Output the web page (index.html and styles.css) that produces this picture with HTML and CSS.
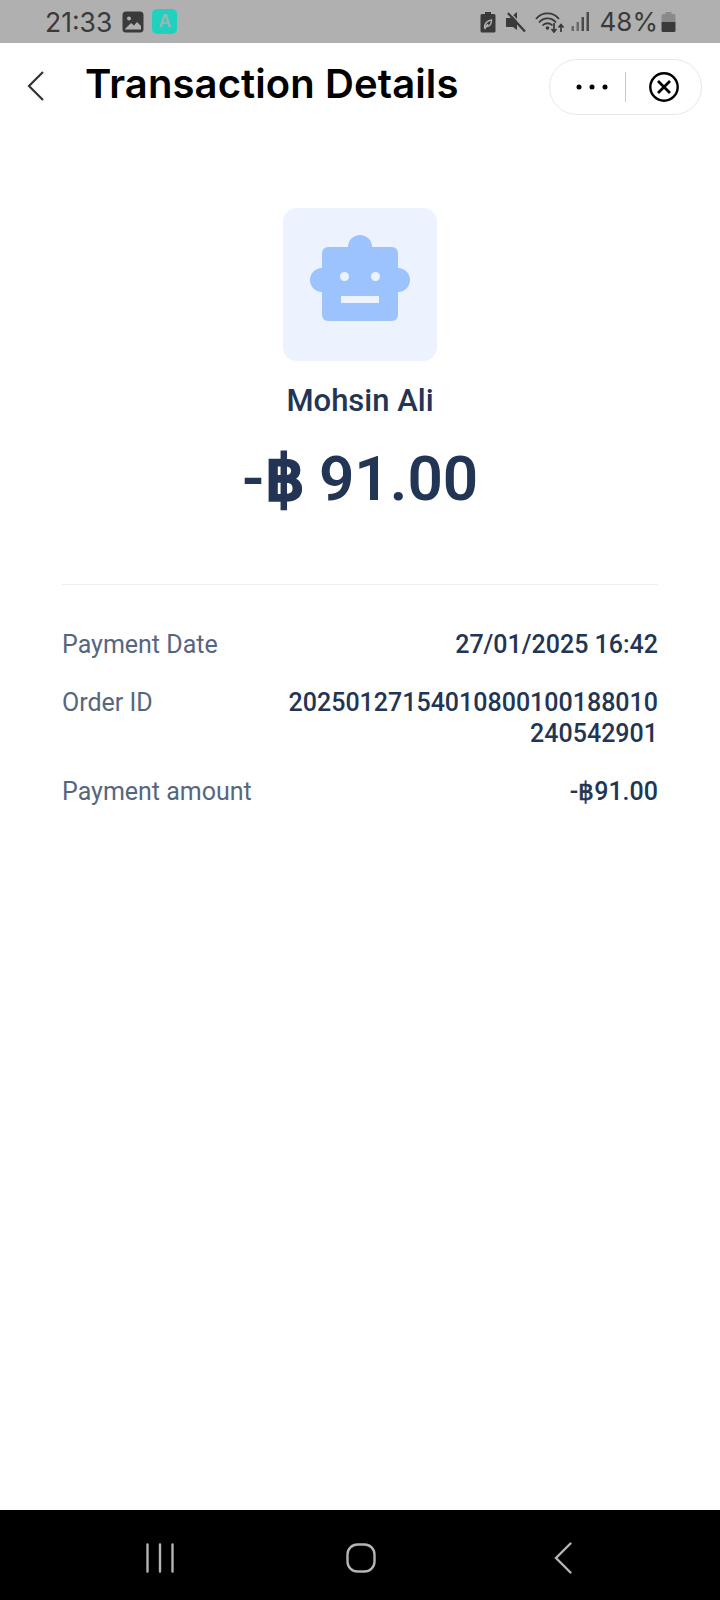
FILE: index.html
```html
<!DOCTYPE html>
<html>
<head>
  <title>Transaction Details</title>
  <meta name='viewport' content='width=device-width, initial-scale=1'>
  <link rel="stylesheet" href="styles.css">
</head>
<body>
  <div class='screen'>
    <div class='status-bar'>
      <div class='status-left'>
        <span class='time'>21:33</span>
        <svg class='pic-icon' width='22' height='22' viewBox='0 0 22 22'>
          <rect x='0.5' y='0.5' width='21' height='21' rx='3.5' fill='#3a3a3a'/>
          <circle cx='7' cy='7.5' r='2' fill='#b0b0b0'/>
          <path d='M3 18 L9 12 L12 14.500 L15 11 L19 15 V18.500 H3 Z' fill='#b0b0b0'/>
        </svg>
        <span class='app-badge'>A</span>
      </div>
      <div class='status-right'>
        <svg width='16' height='22' viewBox='0 0 16 22'>
          <path d='M5 1 H11 V3 H14 a1.5 1.5 0 0 1 1.5 1.5 V20 a1.5 1.5 0 0 1 -1.5 1.5 H2 a1.5 1.5 0 0 1 -1.5 -1.5 V4.500 A1.5 1.5 0 0 1 2 3 H5 Z' fill='#3a3a3a'/>
          <path d='M4.500 17 C4.500 11 8 9.500 11.500 9 C11.500 13 10 15.500 6.500 15.500 M4.500 18 L8 13' fill='none' stroke='#b0b0b0' stroke-width='1.4'/>
        </svg>
        <svg class='mute-icon' width='22' height='22' viewBox='0 0 22 22'>
          <path d='M1 7 H5 L12 1 V19 L8 16 H1 Z' fill='#3a3a3a'/>
          <path d='M3 2 L20 20.500' stroke='#3a3a3a' stroke-width='2.400'/>
          <path d='M4 0.500 L21.500 19' stroke='#b0b0b0' stroke-width='1.200'/>
        </svg>
        <svg class='wifi-icon' width='30' height='22' viewBox='0 0 30 22'>
          <path d='M1 8 C7 0.500 18 0.500 24 8 M4 11.500 C8.500 6 16.500 6 21 11.500 M7.500 14.500 C10 11.500 15 11.500 17.500 14.500' fill='none' stroke='#3a3a3a' stroke-width='1.800'/>
          <circle cx='12.500' cy='17' r='1.800' fill='#3a3a3a'/>
          <path d='M19 12 V21 M16.500 18 L19 21 L21.500 18 M26 21 V14 M23.500 16.500 L26 13.500 L28.500 16.500' fill='none' stroke='#3a3a3a' stroke-width='1.700'/>
        </svg>
        <svg class='signal-icon' width='20' height='22' viewBox='0 0 20 22'>
          <rect x='0.500' y='15' width='2.500' height='5' fill='#6a6a6a'/>
          <rect x='5.500' y='11' width='2.500' height='9' fill='#6a6a6a'/>
          <rect x='10.500' y='6' width='2.500' height='14' fill='#4a4a4a'/>
          <rect x='15.500' y='1' width='2.500' height='19' fill='#4a4a4a'/>
        </svg>
        <span class='battery-text'>48%</span>
        <svg class='battery-icon' width='15' height='22' viewBox='0 0 15 22'>
          <path d='M4.500 1 H10.500 V3 H13 a1.500 1.500 0 0 1 1.500 1.500 V11 H0.500 V4.500 A1.500 1.500 0 0 1 2 3 H4.500 Z' fill='#8a8a8a'/>
          <path d='M0.500 11 H14.500 V19.500 a1.500 1.500 0 0 1 -1.500 1.500 H2 a1.500 1.500 0 0 1 -1.500 -1.500 Z' fill='#3a3a3a'/>
        </svg>
      </div>
    </div>

    <div class='title-bar'>
      <svg class='back-icon' width='20' height='32' viewBox='0 0 20 32'>
        <path d='M17 2 L3 16 L17 30' fill='none' stroke='#333' stroke-width='2.200'/>
      </svg>
      <h1>Transaction Details</h1>
      <div class='capsule'>
        <svg class='dots' width='32' height='6' viewBox='0 0 32 6'>
          <circle cx='3' cy='3' r='2.500' fill='#000'/>
          <circle cx='16' cy='3' r='2.500' fill='#000'/>
          <circle cx='29' cy='3' r='2.500' fill='#000'/>
        </svg>
        <span class='capsule-sep'></span>
        <svg width='32' height='32' viewBox='0 0 32 32'>
          <circle cx='16' cy='16' r='13.700' fill='none' stroke='#000' stroke-width='2.400'/>
          <path d='M10 10 L22 22 M22 10 L10 22' stroke='#000' stroke-width='2.800'/>
        </svg>
      </div>
    </div>

    <div class='content'>
      <div class='avatar'>
        <svg class='bot' width='100' height='86' viewBox='0 0 100 86'>
          <circle cx='50' cy='12' r='12' fill='#9dc3fe'/>
          <circle cx='12' cy='45' r='12' fill='#9dc3fe'/>
          <circle cx='88' cy='45' r='12' fill='#9dc3fe'/>
          <rect x='12' y='12' width='76' height='74' rx='6' fill='#9dc3fe'/>
          <circle cx='34.500' cy='41.500' r='4.500' fill='#ecf3ff'/>
          <circle cx='65.500' cy='41.500' r='4.500' fill='#ecf3ff'/>
          <rect x='31' y='61' width='38' height='7' fill='#ecf3ff'/>
        </svg>
      </div>
      <div class='name'>Mohsin Ali</div>
      <div class='amount'>-<span class='baht'>฿</span> 91.00</div>
      <div class='details'>
        <div class='detail-row'>
          <div class='detail-label'>Payment Date</div>
          <div class='detail-value'>27/01/2025 16:42</div>
        </div>
        <div class='detail-row'>
          <div class='detail-label'>Order ID</div>
          <div class='detail-value'>20250127154010800100188010240542901</div>
        </div>
        <div class='detail-row'>
          <div class='detail-label'>Payment amount</div>
          <div class='detail-value'>-<span class='baht-small'>฿</span>91.00</div>
        </div>
      </div>
    </div>

    <div class='nav-bar'>
      <svg class='nav-recent' width='28' height='30' viewBox='0 0 28 30'>
        <path d='M1.500 1.500 V28.500 M14 1.500 V28.500 M26.500 1.500 V28.500' stroke='#b4b4b4' stroke-width='2.400' stroke-linecap='round'/>
      </svg>
      <svg class='nav-home' width='30' height='30' viewBox='0 0 30 30'>
        <rect x='1.500' y='1.500' width='27' height='27' rx='10' fill='none' stroke='#b4b4b4' stroke-width='2.400'/>
      </svg>
      <svg class='nav-back' width='18' height='32' viewBox='0 0 18 32'>
        <path d='M16.500 1.500 L2 16 L16.500 30.500' fill='none' stroke='#b4b4b4' stroke-width='2.400' stroke-linecap='round'/>
      </svg>
    </div>
  </div>
</body>
</html>
```

FILE: styles.css
```css
* {
  box-sizing: border-box;
}
body {
  margin: 0;
  background-color: #fff;
  font-family: Roboto, "Noto Sans", sans-serif;
}
.screen {
  width: 720px;
  height: 1600px;
  display: flex;
  flex-direction: column;
  overflow: hidden;
}
.status-bar {
  height: 43px;
  padding: 0 44px 0 45px;
  display: flex;
  align-items: center;
  justify-content: space-between;
  background-color: #b0b0b0;
  color: #3a3a3a;
}
.status-left, .status-right {
  display: flex;
  align-items: center;
}
.time {
  font-family: Inter, sans-serif;
  font-size: 26.5px;
  margin-right: 10px;
}
.app-badge {
  width: 25px;
  height: 25px;
  margin-left: 8px;
  border-radius: 5px;
  background-color: #22d0c0;
  color: #8fb9b5;
  font-family: Inter, sans-serif;
  font-size: 17px;
  font-weight: 700;
  line-height: 25px;
  text-align: center;
}
.mute-icon {
  margin-left: 9px;
}
.wifi-icon {
  margin-left: 8px;
}
.signal-icon {
  margin-left: 6px;
}
.battery-text {
  font-family: Inter, sans-serif;
  font-size: 26px;
  margin-left: 9px;
  margin-right: 3px;
}
.title-bar {
  height: 80px;
  padding: 0 18px 0 26px;
  display: flex;
  align-items: center;
}
.back-icon {
  margin-top: 6px;
}
.title-bar h1 {
  margin: 0 0 0 39px;
  font-family: Inter, sans-serif;
  font-size: 40px;
  font-weight: 600;
  letter-spacing: 0.1px;
  color: #000;
  white-space: nowrap;
}
.capsule {
  margin-left: auto;
  margin-top: 8px;
  width: 153px;
  height: 56px;
  border: 1px solid #e8e8e8;
  border-radius: 28px;
  display: flex;
  align-items: center;
  padding-left: 26px;
}
.capsule-sep {
  width: 1px;
  height: 30px;
  margin: 0 22px 0 17px;
  background-color: #c8c8c8;
}
.content {
  flex: 1;
  padding: 85px 62px 0;
  display: flex;
  flex-direction: column;
  align-items: center;
}
.avatar {
  width: 154px;
  height: 153px;
  border-radius: 14px;
  background-color: #ecf3ff;
  display: flex;
  align-items: center;
  justify-content: center;
}
.bot {
  margin-bottom: 14px;
}
.name {
  margin-top: 20px;
  font-size: 31px;
  font-weight: 500;
  line-height: 40px;
  color: #233554;
}
.amount {
  margin-top: 19px;
  font-size: 62px;
  font-weight: 600;
  line-height: 78px;
  color: #233554;
}
.baht {
  -webkit-text-stroke: 1.5px #233554;
}
.details {
  width: 100%;
  margin-top: 66px;
  padding-top: 44px;
  border-top: 1px solid #eceef1;
}
.detail-row {
  display: flex;
  justify-content: space-between;
  margin-bottom: 27px;
  font-size: 25px;
  line-height: 31px;
}
.detail-label {
  color: #56667f;
  white-space: nowrap;
}
.detail-value {
  width: 375px;
  text-align: right;
  word-break: break-all;
  font-weight: 500;
  color: #233554;
}
.baht-small {
  -webkit-text-stroke: 0.6px #233554;
}
.nav-bar {
  height: 90px;
  padding: 5px 0 0 146px;
  display: flex;
  align-items: center;
  background-color: #000;
}
.nav-home {
  margin-left: 172px;
}
.nav-back {
  margin-left: 178px;
}
```
